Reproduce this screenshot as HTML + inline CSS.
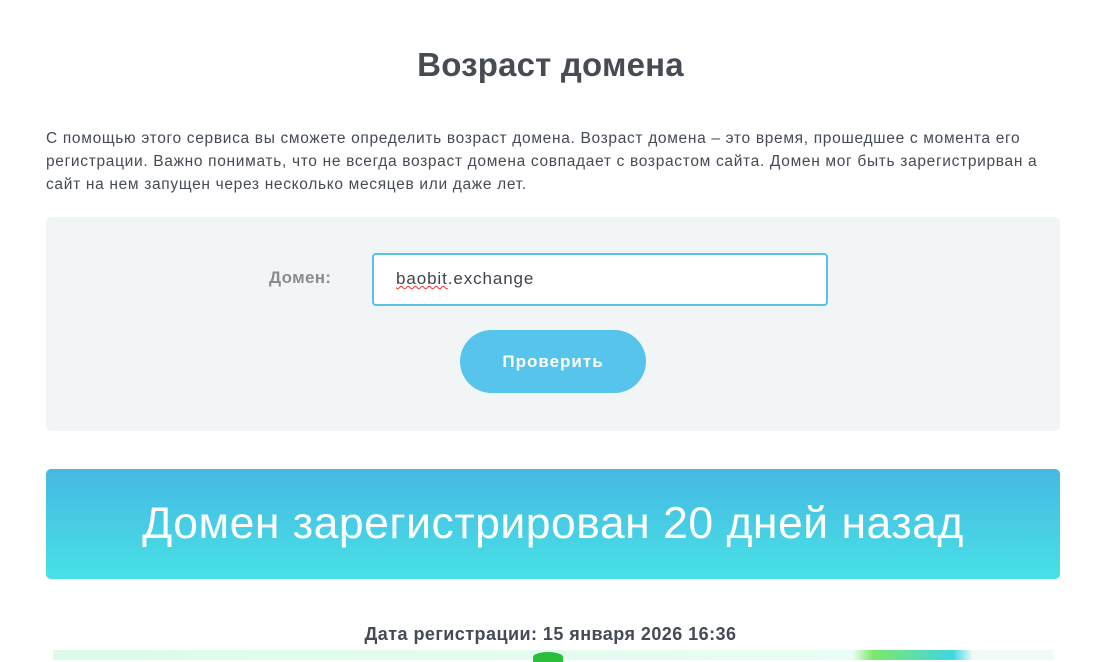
<!DOCTYPE html>
<html><head><meta charset="utf-8"><style>
*{margin:0;padding:0;box-sizing:border-box}
html,body{width:1101px;height:660px;overflow:hidden;background:#fff;font-family:"Liberation Sans",sans-serif;color:#454a54}
h1{position:absolute;top:46px;left:0;width:1101px;text-align:center;font-size:33px;font-weight:bold;color:#474b53;letter-spacing:0.2px}
.p{position:absolute;top:127px;left:46px;width:1050px;font-size:15.5px;line-height:23px;color:#454a54;letter-spacing:0.68px;white-space:nowrap}
.box{position:absolute;top:217px;left:46px;width:1014px;height:214px;background:#f2f5f6;border-radius:5px}
.lbl{position:absolute;top:268px;left:269px;font-size:17px;font-weight:bold;color:#8a8d90;letter-spacing:0.3px}
.inp{position:absolute;top:253px;left:372px;width:456px;height:53px;background:#fff;border:2px solid #5bc2ea;border-radius:4px;font-size:17px;padding:14px 0 0 22px;color:#3f434a;letter-spacing:0.9px}
.inp u{text-decoration:underline wavy #e33;text-decoration-thickness:1px}
.btn{position:absolute;top:330px;left:460px;width:186px;height:63px;border-radius:32px;background:#56c4eb;color:#fff;font-weight:bold;font-size:17px;text-align:center;line-height:63px;letter-spacing:1px}
.res{position:absolute;top:469px;left:46px;width:1014px;height:110px;border-radius:5px;background:linear-gradient(#46b8e3,#48e1e6);color:#fff;font-size:44.5px;text-align:center;line-height:110px;letter-spacing:0.5px}
.dt{position:absolute;top:624px;left:0;width:1101px;text-align:center;font-size:18px;font-weight:bold;color:#454a54;letter-spacing:0.45px}
.ad{position:absolute;top:650px;left:53px;width:1000px;height:10px;background:linear-gradient(90deg,#dcfbe9,#e8fdf3 80%,#7de86a 82%,#40d6e0 90%,#f0fbf7 92%)}
.ad i{position:absolute;left:480px;top:2px;width:30px;height:10px;background:#2bbe3a;border-radius:50% 50% 0 0}
</style></head><body>
<h1>Возраст домена</h1>
<div class="p">С помощью этого сервиса вы сможете определить возраст домена. Возраст домена – это время, прошедшее с момента его<br>регистрации. Важно понимать, что не всегда возраст домена совпадает с возрастом сайта. Домен мог быть зарегистрирван а<br>сайт на нем запущен через несколько месяцев или даже лет.</div>
<div class="box"></div>
<div class="lbl">Домен:</div>
<div class="inp"><u>baobit</u>.exchange</div>
<div class="btn">Проверить</div>
<div class="res">Домен зарегистрирован 20 дней назад</div>
<div class="dt">Дата регистрации: 15 января 2026 16:36</div>
<div class="ad"><i></i></div>
</body></html>
